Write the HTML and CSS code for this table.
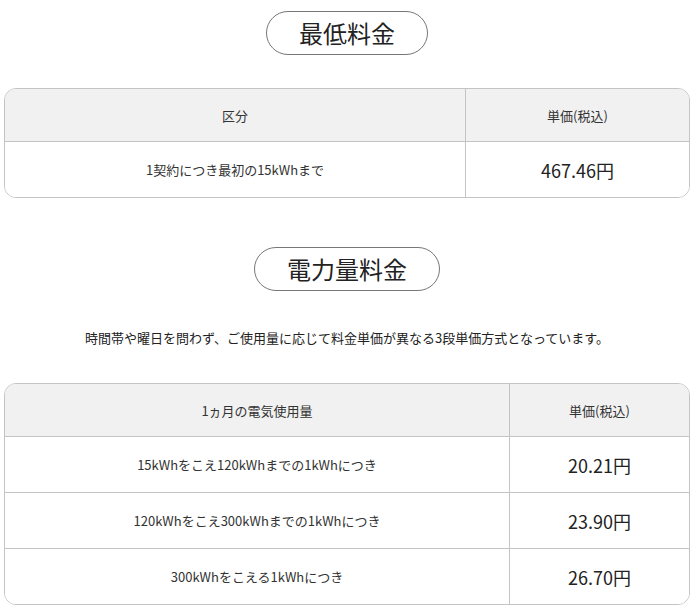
FILE: index.html
```html
<!DOCTYPE html>
<html lang="ja">
<head>
<meta charset="utf-8">
<title>料金表</title>
<link rel="stylesheet" href="styles.css">
</head>
<body>
<main class="page">
  <section class="block block-min">
    <div class="heading"><h2 class="pill">最低料金</h2></div>
    <div class="table-wrap">
      <table class="rate rate-min">
        <thead>
          <tr><th class="col-label">区分</th><th class="col-price">単価(税込)</th></tr>
        </thead>
        <tbody>
          <tr><td class="col-label">1契約につき最初の15kWhまで</td><td class="col-price price">467.46円</td></tr>
        </tbody>
      </table>
    </div>
  </section>

  <section class="block block-energy">
    <div class="heading"><h2 class="pill">電力量料金</h2></div>
    <p class="note">時間帯や曜日を問わず、ご使用量に応じて料金単価が異なる3段単価方式となっています。</p>
    <div class="table-wrap">
      <table class="rate rate-energy">
        <thead>
          <tr><th class="col-label">1ヵ月の電気使用量</th><th class="col-price">単価(税込)</th></tr>
        </thead>
        <tbody>
          <tr><td class="col-label">15kWhをこえ120kWhまでの1kWhにつき</td><td class="col-price price">20.21円</td></tr>
          <tr><td class="col-label">120kWhをこえ300kWhまでの1kWhにつき</td><td class="col-price price">23.90円</td></tr>
          <tr><td class="col-label">300kWhをこえる1kWhにつき</td><td class="col-price price">26.70円</td></tr>
        </tbody>
      </table>
    </div>
  </section>
</main>
</body>
</html>
```

FILE: styles.css
```css
* { box-sizing: border-box; }

html, body {
  margin: 0;
  padding: 0;
  background: #ffffff;
}

body {
  font-family: "Noto Sans CJK JP", "Noto Sans", sans-serif;
  color: #333333;
}

.page {
  width: 686px;
  margin-left: 4px;
  padding-top: 11px;
}

.heading {
  display: flex;
  justify-content: center;
}

.pill {
  margin: 0;
  padding: 3px 32px;
  border: 1px solid #777777;
  border-radius: 22px;
  font-size: 24px;
  line-height: 36px;
  font-weight: 400;
  color: #222222;
  letter-spacing: 0;
}

.block-min .heading { margin-bottom: 33px; }

.block-energy { margin-top: 49px; }

.note {
  margin: 37px 0 35px;
  text-align: center;
  font-size: 13px;
  line-height: 20px;
  color: #222222;
}

.table-wrap {
  border: 1px solid #c4c4c4;
  border-radius: 12px;
  overflow: hidden;
}

.rate {
  width: 100%;
  border-collapse: separate;
  border-spacing: 0;
  table-layout: fixed;
}

.rate th,
.rate td {
  padding: 0;
  text-align: center;
  vertical-align: middle;
  font-size: 13px;
  font-weight: 400;
  color: #333333;
}

.rate th {
  height: 52px;
  background: #f1f1f1;
}

.rate td {
  height: 56px;
  border-top: 1px solid #c4c4c4;
  background: #ffffff;
}

.rate .col-price {
  border-left: 1px solid #c4c4c4;
}

.rate-min .col-price { width: 224px; }
.rate-energy .col-price { width: 180px; }

.rate td.price {
  font-size: 18px;
  color: #222222;
}
```
